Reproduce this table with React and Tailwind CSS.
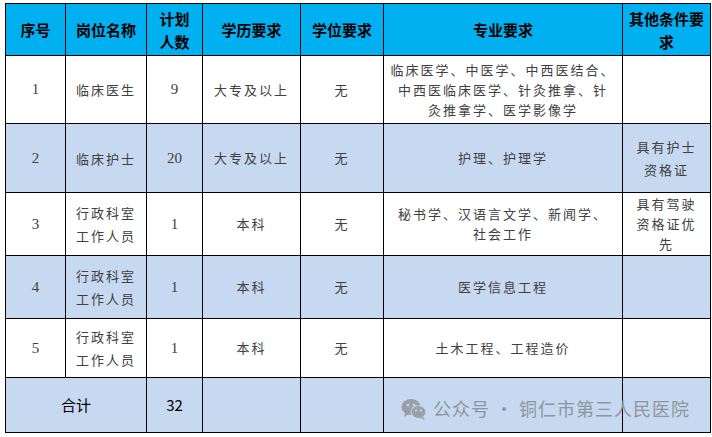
import React from "react";

const cjk = { fontFamily: '"Noto Sans CJK SC", "Noto Sans", sans-serif' };
const num = { fontFamily: '"Liberation Serif", "Noto Sans CJK SC", serif' };

const rows = [
  { no: "1", name: ["临床医生"], n: "9", edu: "大专及以上", deg: "无", major: ["临床医学、中医学、中西医结合、", "中西医临床医学、针灸推拿、针", "灸推拿学、医学影像学"], other: [], bg: "bg-white", h: "h-[68px]" },
  { no: "2", name: ["临床护士"], n: "20", edu: "大专及以上", deg: "无", major: ["护理、护理学"], other: ["具有护士", "资格证"], bg: "bg-[#c6d9f1]", h: "h-[69px]" },
  { no: "3", name: ["行政科室", "工作人员"], n: "1", edu: "本科", deg: "无", major: ["秘书学、汉语言文学、新闻学、", "社会工作"], other: ["具有驾驶", "资格证优", "先"], bg: "bg-white", h: "h-[63px]", tight: true },
  { no: "4", name: ["行政科室", "工作人员"], n: "1", edu: "本科", deg: "无", major: ["医学信息工程"], other: [], bg: "bg-[#c6d9f1]", h: "h-[63px]" },
  { no: "5", name: ["行政科室", "工作人员"], n: "1", edu: "本科", deg: "无", major: ["土木工程、工程造价"], other: [], bg: "bg-white", h: "h-[59px]" },
];

function Lines({ lines, cls = "" }) {
  return (
    <div className={"flex flex-col items-center " + cls}>
      {lines.map((l, i) => (
        <span key={i} className="block whitespace-nowrap">{l}</span>
      ))}
    </div>
  );
}

const td = "border border-black text-center align-middle p-0";
const body = "text-[13px] leading-[20px] tracking-[2px] text-[#404040]";

function WeChat() {
  return (
    <svg width="26" height="22" viewBox="0 0 26 22">
      <ellipse cx="10" cy="9" rx="9.5" ry="8" fill="#9aa0a8" />
      <path d="M4 15 L3 19 L8 16 Z" fill="#9aa0a8" />
      <circle cx="7" cy="7" r="1.3" fill="#c6d9f1" />
      <circle cx="13" cy="7" r="1.3" fill="#c6d9f1" />
      <ellipse cx="17.5" cy="14" rx="8" ry="6.8" fill="#c6d9f1" />
      <ellipse cx="17.5" cy="14" rx="7" ry="6" fill="#9aa0a8" />
      <path d="M22 19 L24 22 L19 20 Z" fill="#9aa0a8" />
      <circle cx="15" cy="12.5" r="1.1" fill="#c6d9f1" />
      <circle cx="20" cy="12.5" r="1.1" fill="#c6d9f1" />
    </svg>
  );
}

export default function App() {
  return (
    <div className="w-[712px] h-[437px] bg-white pt-[3px] pl-[5px] relative overflow-hidden" style={cjk}>
      <table className="border-collapse table-fixed w-[705px]">
        <colgroup>
          <col className="w-[60px]" />
          <col className="w-[81px]" />
          <col className="w-[56px]" />
          <col className="w-[98px]" />
          <col className="w-[83px]" />
          <col className="w-[239px]" />
          <col className="w-[88px]" />
        </colgroup>
        <thead>
          <tr className="h-[52px] bg-[#00b0f0] text-[15px] font-bold text-black leading-[23px]">
            <th className={td}>序号</th>
            <th className={td}>岗位名称</th>
            <th className={td}><Lines lines={["计划", "人数"]} /></th>
            <th className={td}>学历要求</th>
            <th className={td}>学位要求</th>
            <th className={td}>专业要求</th>
            <th className={td}><Lines lines={["其他条件要", "求"]} /></th>
          </tr>
        </thead>
        <tbody>
          {rows.map((r) => (
            <tr key={r.no} className={r.bg + " " + r.h}>
              <td className={td + " text-[15px] text-[#404040]"} style={num}>{r.no}</td>
              <td className={td + " " + body}><Lines lines={r.name} cls="leading-[23px]" /></td>
              <td className={td + " text-[15px] text-[#404040]"} style={num}>{r.n}</td>
              <td className={td + " " + body}>{r.edu}</td>
              <td className={td + " " + body}>{r.deg}</td>
              <td className={td + " " + body}><Lines lines={r.major} /></td>
              <td className={td + " " + body}>
                <Lines lines={r.other} cls={r.tight ? "leading-[20px]" : "leading-[23px]"} />
              </td>
            </tr>
          ))}
          <tr className="h-[55px] bg-[#c6d9f1] text-[15px] text-black">
            <td className={td} colSpan={2}>合计</td>
            <td className={td}>32</td>
            <td className={td}></td>
            <td className={td}></td>
            <td className={td}></td>
            <td className={td}></td>
          </tr>
        </tbody>
      </table>
      <div className="absolute left-[401px] top-[395px] flex items-center gap-[6px] text-[18px] text-[#8f959c] tracking-[1px]">
        <WeChat />
        <span>公众号 · 铜仁市第三人民医院</span>
      </div>
    </div>
  );
}
